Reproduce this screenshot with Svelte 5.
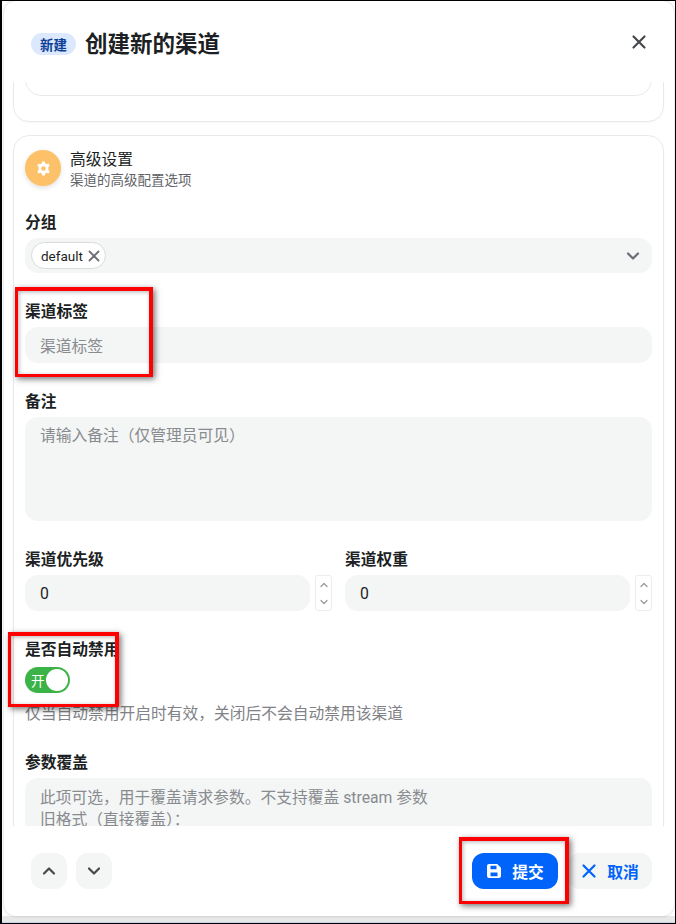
<script>
	const tags = ['default'];
</script>

<div class="screen">
	<div class="modal">
		<header class="head">
			<span class="badge">新建</span>
			<h1>创建新的渠道</h1>
			<button class="close" aria-label="关闭">
				<svg width="16" height="16" viewBox="0 0 16 16" fill="none" stroke="#46494e" stroke-width="2.2" stroke-linecap="round">
					<path d="M2.5 2.5l11 11M13.5 2.5l-11 11" />
				</svg>
			</button>
		</header>

		<div class="body">
			<section class="card clipped">
				<div class="inner"></div>
			</section>

			<section class="card">
				<div class="card-head">
					<span class="avatar">
						<svg width="17" height="17" viewBox="0 0 24 24" fill="#fff">
							<path fill-rule="evenodd" d="M13.9 2h-3.8l-.5 2.8a7.6 7.6 0 0 0-1.9 1.1L5 4.9 3.1 8.1l2.2 1.8a7.7 7.7 0 0 0 0 4.2l-2.2 1.8L5 19.100l2.700-1a7.600 7.600 0 0 0 1.900 1.100l.5 2.800h3.800l.5-2.800a7.600 7.600 0 0 0 1.900-1.100l2.700 1 1.900-3.200-2.200-1.800a7.700 7.700 0 0 0 0-4.200l2.200-1.800L19 4.900l-2.700 1a7.600 7.600 0 0 0-1.900-1.100zM12 8.700a3.300 3.300 0 1 1 0 6.600 3.300 3.300 0 0 1 0-6.600z" />
						</svg>
					</span>
					<div class="card-text">
						<div class="card-title">高级设置</div>
						<div class="card-sub">渠道的高级配置选项</div>
					</div>
				</div>

				<div class="field">
					<div class="label">分组</div>
					<div class="select">
						{#each tags as tag}
							<span class="tag">
								{tag}
								<svg width="12" height="12" viewBox="0 0 12 12" fill="none" stroke="#6b6f75" stroke-width="1.8" stroke-linecap="round">
									<path d="M1.500 1.500l9 9M10.500 1.500l-9 9" />
								</svg>
							</span>
						{/each}
						<svg class="arrow" width="16" height="16" viewBox="0 0 16 16" fill="none" stroke="#6b6f75" stroke-width="2.200" stroke-linecap="round" stroke-linejoin="round">
							<path d="M3 5.500l5 5 5-5" />
						</svg>
					</div>
				</div>

				<div class="field">
					<div class="label">渠道标签</div>
					<div class="input placeholder">渠道标签</div>
				</div>

				<div class="field">
					<div class="label">备注</div>
					<div class="textarea placeholder">请输入备注（仅管理员可见）</div>
				</div>

				<div class="row">
					{#each ['渠道优先级', '渠道权重'] as name}
						<div class="col">
							<div class="label">{name}</div>
							<div class="number">
								<div class="input value">0</div>
								<div class="stepper">
									<svg width="10" height="10" viewBox="0 0 10 10" fill="none" stroke="#9a9da1" stroke-width="1.300" stroke-linecap="round" stroke-linejoin="round"><path d="M2 6.500l3-3 3 3" /></svg>
									<svg width="10" height="10" viewBox="0 0 10 10" fill="none" stroke="#9a9da1" stroke-width="1.300" stroke-linecap="round" stroke-linejoin="round"><path d="M2 3.500l3 3 3-3" /></svg>
								</div>
							</div>
						</div>
					{/each}
				</div>

				<div class="field auto-disable">
					<div class="label">是否自动禁用</div>
					<div class="switch"><span>开</span><i></i></div>
					<div class="hint">仅当自动禁用开启时有效，关闭后不会自动禁用该渠道</div>
				</div>

				<div class="field last">
					<div class="label">参数覆盖</div>
					<div class="textarea placeholder tall">此项可选，用于覆盖请求参数。不支持覆盖 stream 参数<br />旧格式（直接覆盖）：</div>
				</div>
			</section>
		</div>

		<footer class="foot">
			<button class="nav" aria-label="上一项">
				<svg width="16" height="16" viewBox="0 0 16 16" fill="none" stroke="#46494e" stroke-width="2.200" stroke-linecap="round" stroke-linejoin="round"><path d="M3 10.500l5-5 5 5" /></svg>
			</button>
			<button class="nav" aria-label="下一项">
				<svg width="16" height="16" viewBox="0 0 16 16" fill="none" stroke="#46494e" stroke-width="2.200" stroke-linecap="round" stroke-linejoin="round"><path d="M3 5.500l5 5 5-5" /></svg>
			</button>
			<span class="spacer"></span>
			<button class="primary">
				<svg width="16" height="16" viewBox="0 0 16 16" fill="#fff">
					<path fill-rule="evenodd" d="M3 1h8.200L15 4.800V13a2 2 0 0 1-2 2H3a2 2 0 0 1-2-2V3a2 2 0 0 1 2-2zm1.500 1.800v3.400h6V2.800zm0 6.600v3.800h7V9.400z" />
				</svg>
				提交
			</button>
			<button class="cancel">
				<svg width="16" height="16" viewBox="0 0 16 16" fill="none" stroke="#0064fa" stroke-width="2.200" stroke-linecap="round"><path d="M2.500 2.500l11 11M13.500 2.500l-11 11" /></svg>
				取消
			</button>
		</footer>
	</div>

	<!-- red annotation boxes drawn over the screenshot -->
	<div class="mark m1"></div>
	<div class="mark m2"></div>
	<div class="mark m3"></div>
</div>

<style>
	:global(body) {
		margin: 0;
		background: #fff;
	}

	.screen {
		position: relative;
		width: 676px;
		height: 924px;
		box-sizing: border-box;
		border: 1px solid #000;
		border-width: 1px 1px 1px 2px;
		background: linear-gradient(to bottom, #fff 915px, #e8e8e9 915px, #e8e8e9 921px, #c9d3ea 921px);
		padding: 0 1px 7px 2px;
		overflow: hidden;
		font-family: Roboto, 'Noto Sans CJK SC', sans-serif;
		color: #1c1f23;
	}

	.modal {
		height: 100%;
		background: #fff;
		border-radius: 12px;
		box-shadow: 0 0 3px rgba(0, 0, 0, 0.22);
		display: flex;
		flex-direction: column;
		overflow: hidden;
	}

	.head {
		flex: none;
		height: 81px;
		box-sizing: border-box;
		padding: 5px 27px 0 27px;
		display: flex;
		align-items: center;
		gap: 9px;
	}

	.badge {
		width: 45px;
		height: 22px;
		border-radius: 11px;
		background: #dbe8fd;
		color: #0a3f96;
		font-size: 13.500px;
		font-weight: 600;
		display: flex;
		align-items: center;
		justify-content: center;
	}

	h1 {
		margin: 0;
		font-size: 22.500px;
		line-height: 30px;
		font-weight: 700;
		flex: 1;
	}

	.close {
		border: none;
		background: none;
		padding: 0;
		margin-top: -5px;
		display: flex;
	}

	.body {
		flex: 1;
		min-height: 0;
		overflow: hidden;
		padding: 0 10px 0 9px;
	}

	.card {
		border: 1px solid #e8e9eb;
		border-radius: 16px;
		box-shadow: 0 1px 2px rgba(0, 0, 0, 0.04);
		padding: 14px 11px;
		margin-bottom: 13px;
	}

	.clipped {
		margin-top: -26px;
		height: 64px;
		padding: 0 11px;
	}

	.inner {
		height: 37px;
		border: 1px solid #e8e9eb;
		border-radius: 16px;
	}

	.card-head {
		display: flex;
		align-items: center;
		gap: 9px;
		margin-bottom: 22px;
		margin-top: -3px;
	}

	.card-text {
		padding-top: 2px;
	}

	.avatar {
		width: 36px;
		height: 36px;
		border-radius: 50%;
		background: #fdc169;
		box-shadow: 0 2px 5px rgba(0, 0, 0, 0.12);
		display: flex;
		align-items: center;
		justify-content: center;
	}

	.card-title {
		font-size: 15.750px;
		line-height: 22px;
	}

	.card-sub {
		font-size: 13.500px;
		line-height: 18px;
		color: #5f6368;
	}

	.field {
		margin-bottom: 27px;
	}

	.label {
		font-size: 15.750px;
		line-height: 22px;
		font-weight: 600;
		padding-top: 1px;
		margin-bottom: 4px;
	}

	.select,
	.input,
	.textarea {
		background: #f4f5f5;
		border-radius: 13px;
		font-size: 15.750px;
	}

	.select {
		height: 35px;
		box-sizing: border-box;
		padding: 0 11px 0 6px;
		display: flex;
		align-items: center;
		gap: 4px;
	}

	.tag {
		height: 27px;
		box-sizing: border-box;
		padding: 0 5px 0 9px;
		border: 1px solid #d9dadc;
		border-radius: 13.500px;
		background: #fff;
		font-size: 13.500px;
		display: flex;
		align-items: center;
		gap: 5px;
	}

	.arrow {
		margin-left: auto;
	}

	.input {
		height: 36px;
		box-sizing: border-box;
		padding: 0 15px;
		display: flex;
		align-items: center;
	}

	.textarea {
		height: 104px;
		box-sizing: border-box;
		padding: 8px 15px;
		line-height: 22px;
	}

	.tall {
		height: 120px;
		padding-top: 9px;
	}

	.placeholder {
		color: #888b8f;
	}

	.row {
		display: grid;
		grid-template-columns: 1fr 1fr;
		gap: 13px;
		margin: 27px 0;
	}

	.number {
		display: flex;
		gap: 5px;
		align-items: stretch;
	}

	.number .input {
		flex: 1;
	}

	.stepper {
		width: 17px;
		box-sizing: border-box;
		border: 1px solid #ebecee;
		border-radius: 3px;
		display: flex;
		flex-direction: column;
		align-items: center;
		justify-content: space-around;
	}

	.switch {
		width: 45px;
		height: 26px;
		margin-top: 6px;
		border-radius: 13px;
		background: #3bb346;
		color: #fff;
		font-size: 13.500px;
		box-sizing: border-box;
		padding: 0 2px 0 6px;
		display: flex;
		align-items: center;
		justify-content: space-between;
	}

	.switch i {
		width: 22px;
		height: 22px;
		border-radius: 50%;
		background: #fff;
	}

	.hint {
		font-size: 15.750px;
		line-height: 22px;
		color: #7f8286;
		margin-top: 10px;
	}

	.auto-disable {
		margin-bottom: 26px;
	}

	.last {
		margin-bottom: 0;
	}

	.foot {
		flex: none;
		height: 90px;
		box-sizing: border-box;
		padding: 27px 22px 0 27px;
		display: flex;
		align-items: flex-start;
		gap: 9px;
	}

	.spacer {
		flex: 1;
	}

	button {
		font-family: inherit;
		cursor: pointer;
	}

	.nav {
		width: 36px;
		height: 36px;
		border: none;
		border-radius: 12px;
		background: #f4f5f5;
		padding: 0;
		display: flex;
		align-items: center;
		justify-content: center;
	}

	.primary,
	.cancel {
		height: 36px;
		border: none;
		border-radius: 12px;
		font-size: 15.750px;
		font-weight: 600;
		display: flex;
		align-items: center;
		justify-content: center;
		gap: 10px;
		padding: 0;
	}

	.primary {
		width: 86px;
		background: #0064fa;
		color: #fff;
	}

	.cancel {
		width: 84px;
		margin-left: 1px;
		background: #f4f5f5;
		color: #0064fa;
	}

	.mark {
		position: absolute;
		box-sizing: border-box;
		border: solid #f00;
		border-width: 4px 4px 3px 3px;
		box-shadow: 2px 2px 6px rgba(0, 0, 0, 0.55), inset 1px 1px 4px rgba(0, 0, 0, 0.3);
	}

	.m1 {
		left: 13px;
		top: 286px;
		width: 138px;
		height: 90px;
	}

	.m2 {
		left: 6px;
		top: 631px;
		width: 111px;
		height: 75px;
	}

	.m3 {
		left: 457px;
		top: 836px;
		width: 110px;
		height: 67px;
	}
</style>
